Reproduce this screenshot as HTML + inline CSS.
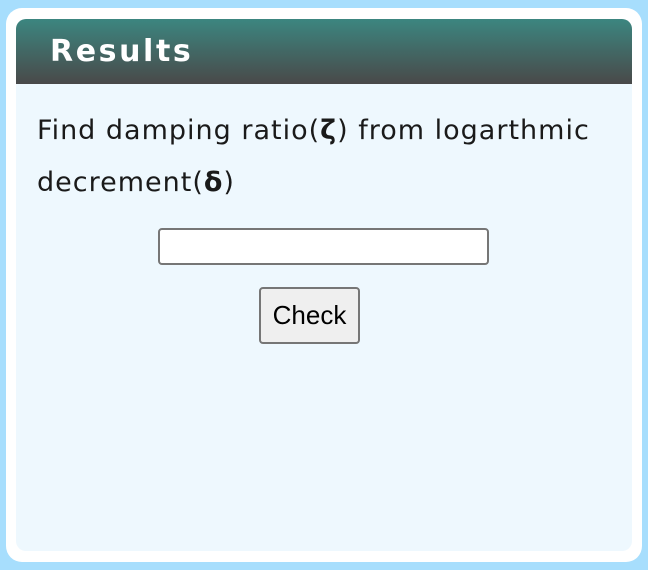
<!DOCTYPE html>
<html><head><style>
body{margin:0;width:648px;height:570px;background:#a7defd;font-family:"Liberation Sans",sans-serif;position:relative;overflow:hidden}
.card{position:absolute;left:6px;top:8px;width:636px;height:554px;background:#fff;border-radius:16px}
.panel{position:absolute;left:16px;top:19px;width:616px;height:532px;background:#eef8fe;border-radius:10px;overflow:hidden}
.hdr{height:65px;background:linear-gradient(#3c8680,#494949);color:#fff;font-weight:bold;font-family:"DejaVu Sans",sans-serif;font-size:30px;letter-spacing:2.6px;line-height:65px;padding-left:34px}
.txt{position:absolute;left:21px;top:86px;width:600px;font-family:"DejaVu Sans",sans-serif;font-size:27px;letter-spacing:1px;line-height:52px;color:#1a1a1a}
input{position:absolute;left:142px;top:209px;width:331px;height:37px;box-sizing:border-box;border:2px solid #767676;border-radius:4px;background:#fff;margin:0;padding:0}
button{position:absolute;left:243px;top:268px;width:101px;height:57px;box-sizing:border-box;border:2px solid #767676;border-radius:4px;background:#efefef;font-family:"Liberation Sans",sans-serif;font-size:26px;color:#000;padding:0}
</style></head><body>
<div class="card"></div>
<div class="panel">
<div class="hdr">Results</div>
<div class="txt">Find damping ratio(<b>ζ</b>) from logarthmic<br>decrement(<b>δ</b>)</div>
<input type="text">
<button>Check</button>
</div>
</body></html>
